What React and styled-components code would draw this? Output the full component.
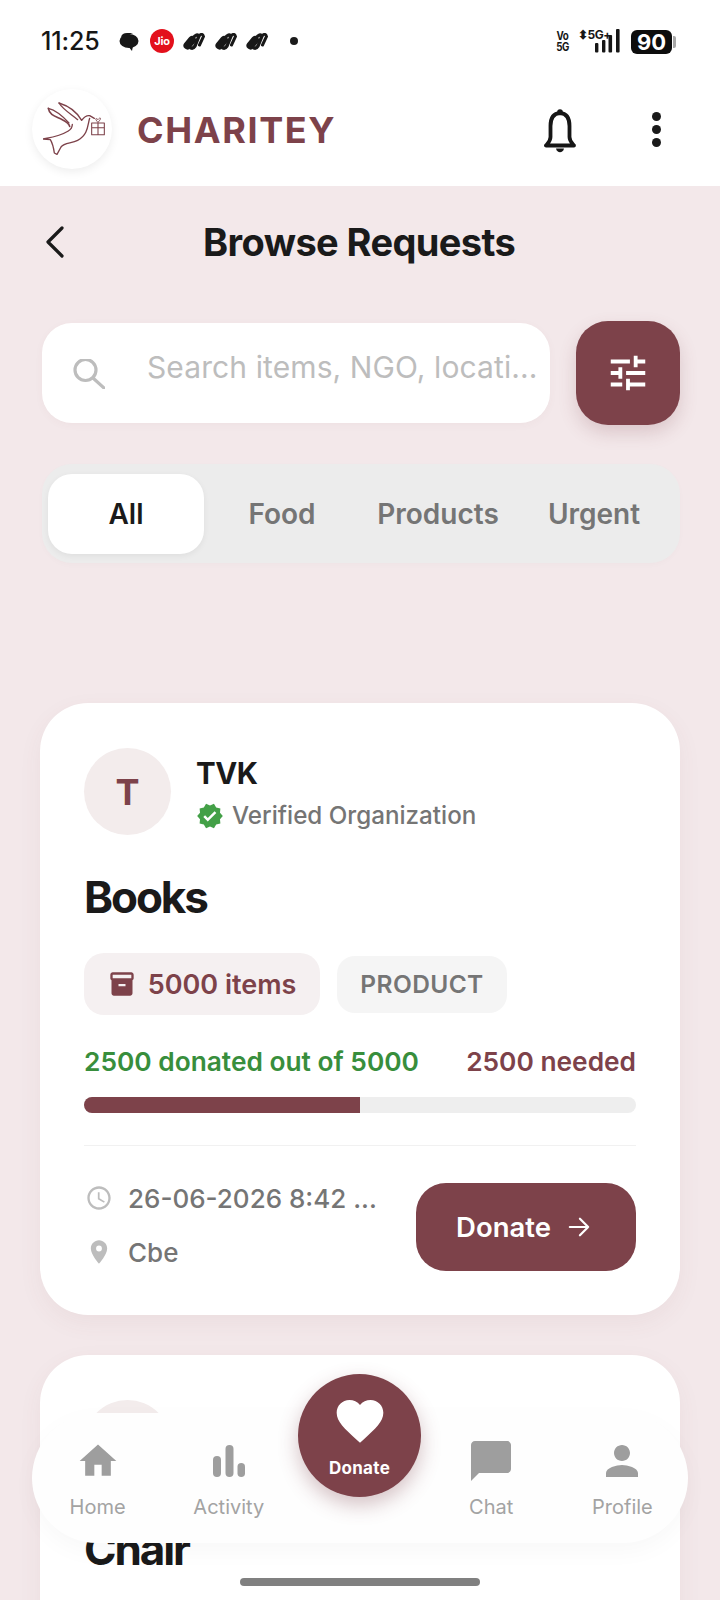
import React from "react";
import styled, { createGlobalStyle } from "styled-components";
import { MdHome, MdChatBubble, MdPerson, MdTune, MdVerified, MdInventory2, MdLocationOn, MdFavorite, MdAccessTime } from "react-icons/md";

const maroon = "#7d424a";
const Global = createGlobalStyle`
  html, body { margin: 0; padding: 0; background: #f3e8ea; }
  * { box-sizing: border-box; }
  body { font-family: Inter, "Liberation Sans", sans-serif; }
`;
const Page = styled.div`
  position: relative; width: 720px; height: 1600px; overflow: hidden; background: #f3e8ea;
`;
const TopBlock = styled.header`
  background: #fff; height: 186px; display: flex; flex-direction: column;
`;
const StatusBar = styled.div`
  height: 82px; padding: 29px 48px 0 41px; display: flex; align-items: flex-start; color: #161616;
`;
const Time = styled.span`
  font-size: 25px; font-weight: 500; line-height: 24px; width: 78px; letter-spacing: -0.1px;
`;
const NotifIcons = styled.div`
  display: flex; align-items: center; height: 24px; flex: 1;
`;
const Jio = styled.span`
  width: 24px; height: 24px; border-radius: 50%; background: #e3101c; color: #fff; font-size: 11px; font-weight: 700;
  display: flex; align-items: center; justify-content: center; margin: 0 9px 0 11px; letter-spacing: -0.3px;
`;
const Blob = styled.svg`
  width: 22px; height: 17px; margin-right: 9.5px;
`;
const Dot = styled.span`
  width: 8px; height: 8px; border-radius: 50%; background: #1b1b1b; margin-left: 12px;
`;
const RightIcons = styled.div`
  display: flex; align-items: flex-start;
`;
const VoLte = styled.span`
  display: flex; flex-direction: column; align-items: center; width: 13px; font-size: 11.5px; font-weight: 700;
  line-height: 10.5px; margin: 2px 10px 0 0; letter-spacing: -0.5px; transform: scaleX(.85);
`;
const SignalWrap = styled.span`
  position: relative; display: block; width: 41px; height: 24px; margin-right: 11px;
`;
const NetLabel = styled.span`
  position: absolute; top: 0; left: -1px; font-size: 12px; font-weight: 700; line-height: 11px; letter-spacing: -0.5px; white-space: nowrap;
`;
const Battery = styled.span`
  position: relative; width: 41px; height: 24px; background: #0d0d0d; color: #fff; border-radius: 6px; font-size: 22px;
  font-weight: 700; line-height: 24px; text-align: center; margin-top: 1px;
  &::after { content: ""; position: absolute; right: -4px; top: 6px; width: 3px; height: 12px; background: #a8a8a8; border-radius: 0 2px 2px 0; }
`;
const AppBar = styled.div`
  flex: 1; display: flex; align-items: flex-start; padding: 7px 0 0 32px;
`;
const LogoCircle = styled.div`
  width: 80px; height: 80px; border-radius: 50%; background: #fff; box-shadow: 0 3px 10px rgba(0,0,0,.07);
  display: flex; align-items: center; justify-content: center;
  svg { margin-left: 5px; }
`;
const Brand = styled.h1`
  margin: 20px 0 0 25px; font-size: 36px; line-height: 42px; font-weight: 700; color: ${maroon}; letter-spacing: 1.6px; flex: 1;
`;
const BellBtn = styled.div`
  width: 32px; height: 44px; margin: 20px 76px 0 0;
`;
const Kebab = styled.div`
  display: flex; flex-direction: column; gap: 4px; margin: 23px 59px 0 0;
  span { width: 9px; height: 9px; border-radius: 50%; background: #1a1a1a; display: block; }
`;
const TitleRow = styled.div`
  display: flex; align-items: center; height: 48px; margin-top: 32px; padding: 0 0 0 44px;
`;
const Title = styled.h2`
  margin: 0 0 0 137px; font-size: 38px; line-height: 48px; font-weight: 700; color: #1a1a1a; letter-spacing: -0.6px;
`;
const SearchRow = styled.div`
  display: flex; gap: 26px; align-items: center; padding: 0 40px 0 42px; margin-top: 55px;
`;
const SearchBox = styled.div`
  width: 508px; height: 100px; border-radius: 30px; background: #fff; padding: 0 0 10px 31px;
  display: flex; align-items: center; box-shadow: 0 2px 8px rgba(125,66,74,.04);
`;
const SearchGlyph = styled.svg`
  flex-shrink: 0; margin-top: 12px;
`;
const Placeholder = styled.span`
  margin: 0 0 3px 42px; font-size: 30px; color: #bdbdbd; white-space: nowrap; letter-spacing: 0.1px;
`;
const FilterBtn = styled.div`
  width: 104px; height: 104px; border-radius: 32px; background: ${maroon}; color: #fff; display: flex; align-items: center;
  justify-content: center; box-shadow: 0 8px 18px rgba(125,66,74,.2);
`;
const Tabs = styled.div`
  display: flex; margin: 39px 40px 0 42px; height: 99px; background: #ececec; border-radius: 30px; padding: 10px 8px 9px 6px;
  box-shadow: 0 2px 6px rgba(0,0,0,.02);
`;
const Tab = styled.div`
  flex: 1; display: flex; align-items: center; justify-content: center; font-size: 28px; font-weight: 600; border-radius: 24px;
  color: ${p => (p.$active ? "#1a1a1a" : "#757575")};
  background: ${p => (p.$active ? "#fff" : "transparent")};
  box-shadow: ${p => (p.$active ? "0 2px 6px rgba(0,0,0,.06)" : "none")};
`;
const Card = styled.article`
  margin: ${p => p.$mt}px 40px 0; height: 612px; background: #fff; border-radius: 48px; padding: 45px 44px 0 44px;
  box-shadow: 0 8px 24px rgba(125,66,74,.06);
`;
const OrgRow = styled.div`
  display: flex; align-items: flex-start; gap: 25px;
`;
const Avatar = styled.div`
  width: 87px; height: 87px; border-radius: 50%; color: ${maroon}; font-size: 36px; font-weight: 700;
  display: flex; align-items: center; justify-content: center; background: #f3ecec;
`;
const OrgName = styled.div`
  font-size: 29.5px; line-height: 36px; font-weight: 700; color: #1a1a1a; margin-top: 7px; letter-spacing: -0.5px;
`;
const VerifiedRow = styled.div`
  display: flex; align-items: center; gap: 8px; font-size: 24.2px; font-weight: 500; color: #757575; margin-top: 7px; line-height: 36px;
`;
const ItemName = styled.h3`
  margin: 35px 0 0; font-size: 44px; line-height: 54px; font-weight: 700; color: #1a1a1a; letter-spacing: -2.1px;
`;
const Chips = styled.div`
  display: flex; align-items: center; gap: 17px; margin-top: 29px;
`;
const QtyChip = styled.div`
  height: 62px; width: 236px; border-radius: 20px; background: #f5f0f1; color: ${maroon}; font-size: 27px; font-weight: 600;
  display: flex; align-items: center; justify-content: center; gap: 12px;
`;
const TypeChip = styled.div`
  height: 57px; width: 170px; border-radius: 18px; background: #f5f5f5; color: #757575; font-size: 24.5px; font-weight: 600;
  display: flex; align-items: center; justify-content: center; letter-spacing: 0.4px;
`;
const ProgressText = styled.div`
  display: flex; justify-content: space-between; margin-top: 30px; font-size: 26.3px; line-height: 34px; font-weight: 600;
`;
const Donated = styled.span` color: #388e3c; `;
const Needed = styled.span` color: ${maroon}; `;
const Track = styled.div`
  height: 16px; border-radius: 8px; background: #eeeeee; margin-top: 18px; overflow: hidden;
`;
const Fill = styled.div`
  height: 100%; background: ${maroon};
`;
const Divider = styled.div`
  height: 1px; background: #f1f1f1; margin-top: 32px;
`;
const Bottom = styled.div`
  display: flex; justify-content: space-between; margin-top: 37px;
`;
const Meta = styled.div`
  display: flex; flex-direction: column; gap: 20px; margin-top: -2px;
`;
const MetaRow = styled.div`
  display: flex; align-items: center; gap: 15px; height: 34px; font-size: 26px; font-weight: 500; color: #757575; white-space: nowrap;
  svg { color: #bdbdbd; margin-left: 1px; }
`;
const DonateBtn = styled.div`
  width: 220px; height: 88px; border-radius: 30px; background: ${maroon}; color: #fff; font-size: 27.5px; font-weight: 600;
  display: flex; align-items: center; justify-content: center; gap: 17px; padding-right: 6px;
`;
const BottomNav = styled.nav`
  position: absolute; left: 32px; top: 1413px; width: 656px; height: 130px; border-radius: 65px; background: #fefefe;
  display: flex; box-shadow: 0 8px 24px rgba(0,0,0,.03);
`;
const NavItem = styled.div`
  flex: 1; display: flex; flex-direction: column; align-items: center; padding-top: 24px; color: #9e9e9e;
`;
const NavIcon = styled.div`
  height: 48px; display: flex; align-items: center; justify-content: center;
`;
const NavLabel = styled.span`
  font-size: 20px; line-height: 24px; color: #a3a3a3; margin-top: 10px;
`;
const Fab = styled.div`
  position: absolute; left: 266px; top: -39px; width: 123px; height: 123px; border-radius: 50%; background: ${maroon}; color: #fff;
  display: flex; flex-direction: column; align-items: center; padding-top: 19px; box-shadow: 0 8px 20px rgba(125,66,74,.32);
  span { font-size: 17px; font-weight: 700; line-height: 22px; margin-top: 12px; letter-spacing: 0.3px; }
`;
const HomeBar = styled.div`
  position: absolute; left: 240px; top: 1578px; width: 240px; height: 8px; border-radius: 4px; background: #808080;
`;

const BlobIcon = () => (
  <Blob viewBox="0 0 22 17">
    <g fill="none" strokeLinecap="round">
      <path d="M4.5 12.5 L9 7" stroke="#181818" strokeWidth="8" />
      <path d="M10 5 Q14 0 16 3 L12 13 Q10 16 8 15" stroke="#181818" strokeWidth="3.4" />
      <path d="M15.5 3 Q19.5 -0.5 20.5 3.5 L16.5 12" stroke="#181818" strokeWidth="3" />
    </g>
  </Blob>
);

const Logo = () => (
  <svg width="64" height="56" viewBox="72 66 192 168" fill="none" stroke={maroon} strokeLinecap="round" strokeLinejoin="round">
    <path d="M88 88 C92 110 110 112 130 122 C142 128 150 134 152 142" strokeWidth="5" />
    <path d="M88 88 C112 94 132 112 150 132" strokeWidth="3.5" />
    <path d="M120 72 C132 92 160 108 176 122" strokeWidth="4" />
    <path d="M120 72 C146 80 172 96 188 124 C194 116 202 108 212 110 L226 118" strokeWidth="4" />
    <path d="M212 118 C206 136 208 168 176 184 C158 194 136 190 126 204 L114 226 L106 222 C104 208 100 192 94 182 L72 180 C92 176 122 172 148 156 C158 150 160 144 160 136" strokeWidth="4" />
    <path d="M218 132 H256 V167 H218 Z M237 132 V167 M218 146 H256" strokeWidth="3.2" />
    <path d="M237 130 C228 122 228 114 237 122 C244 112 250 118 237 130" strokeWidth="2.6" />
  </svg>
);

const Bell = () => (
  <svg width="32" height="44" viewBox="0 0 32 44" fill="none" stroke="#161616">
    <circle cx="16" cy="3" r="2.8" fill="#161616" stroke="none" />
    <path d="M16 4 C8 4.5 6.5 11 6.5 17 V28 C6.5 32 4 34 2 36.5 H30 C28 34 25.5 32 25.5 28 V17 C25.5 11 24 4.5 16 4 Z" strokeWidth="3.8" strokeLinejoin="round" />
    <path d="M12 39.5 H20 C19 44.5 13 44.5 12 39.5 Z" fill="#161616" stroke="none" />
  </svg>
);

const Bars = () => (
  <svg width="32" height="32" viewBox="0 0 32 32" fill="#9e9e9e">
    <rect x="0" y="11" width="8" height="21" rx="4" />
    <rect x="12.5" y="0" width="8" height="32" rx="4" />
    <rect x="24.5" y="18" width="7.5" height="14" rx="3.75" />
  </svg>
);

const Bubble = () => (
  <svg width="20" height="19" viewBox="0 0 20 19" fill="#181818">
    <ellipse cx="10" cy="9" rx="9.5" ry="7" />
    <path d="M9 14 L14 14 L13 19 Z" />
    <path d="M2 5 Q3 1 8 1 L14 1 L9 3 Z" />
  </svg>
);

const SignalIcon = styled.svg`
  position: absolute; left: 16px; top: 0;
`;
const Signal = () => (
  <SignalIcon width="25" height="24" viewBox="0 0 25 24" fill="#161616">
    <rect x="0" y="14" width="3.4" height="9.5" rx="1" />
    <rect x="7" y="11" width="3.4" height="12.5" rx="1" />
    <rect x="13.5" y="6" width="3.6" height="17.5" rx="1" />
    <rect x="21" y="0" width="3.6" height="23.5" rx="1" />
  </SignalIcon>
);

const CardBody = ({ initial, org, item, qty, type, done, total }) => (
  <>
    <OrgRow>
      <Avatar>{initial}</Avatar>
      <div>
        <OrgName>{org}</OrgName>
        <VerifiedRow><MdVerified size={28} color="#43a047" />Verified Organization</VerifiedRow>
      </div>
    </OrgRow>
    <ItemName>{item}</ItemName>
    <Chips>
      <QtyChip><MdInventory2 size={28} />{qty} items</QtyChip>
      <TypeChip>{type}</TypeChip>
    </Chips>
    <ProgressText>
      <Donated>{done} donated out of {total}</Donated>
      <Needed>{total - done} needed</Needed>
    </ProgressText>
    <Track><Fill style={{ width: `${(done / total) * 100}%` }} /></Track>
    <Divider />
    <Bottom>
      <Meta>
        <MetaRow><MdAccessTime size={28} />26-06-2026 8:42 ...</MetaRow>
        <MetaRow><MdLocationOn size={28} />Cbe</MetaRow>
      </Meta>
      <DonateBtn>Donate
        <svg width="22" height="22" viewBox="0 0 24 24" fill="none" stroke="#fff" strokeWidth="2.4" strokeLinecap="round" strokeLinejoin="round"><path d="M2 12 H22 M13 3 L22 12 L13 21" /></svg>
      </DonateBtn>
    </Bottom>
  </>
);

export default function App() {
  return (
    <Page>
      <Global />
      <TopBlock>
        <StatusBar>
          <Time>11:25</Time>
          <NotifIcons>
            <Bubble />
            <Jio>Jio</Jio>
            <BlobIcon /><BlobIcon /><BlobIcon />
            <Dot />
          </NotifIcons>
          <RightIcons>
            <VoLte><span>Vo</span><span>5G</span></VoLte>
            <SignalWrap>
              <NetLabel>⬍5G+</NetLabel>
              <Signal />
            </SignalWrap>
            <Battery>90</Battery>
          </RightIcons>
        </StatusBar>
        <AppBar>
          <LogoCircle><Logo /></LogoCircle>
          <Brand>CHARITEY</Brand>
          <BellBtn><Bell /></BellBtn>
          <Kebab><span /><span /><span /></Kebab>
        </AppBar>
      </TopBlock>
      <TitleRow>
        <svg width="22" height="32" viewBox="0 0 22 32" fill="none" stroke="#1a1a1a" strokeWidth="3.2" strokeLinecap="round" strokeLinejoin="round"><path d="M18 2 L4 16 L18 30" /></svg>
        <Title>Browse Requests</Title>
      </TitleRow>
      <SearchRow>
        <SearchBox>
          <SearchGlyph width="32" height="30" viewBox="0 0 32 30" fill="none" stroke="#bdbdbd" strokeWidth="3.2" strokeLinecap="round">
            <circle cx="12.5" cy="11" r="10.5" />
            <path d="M20 19 L31 29" />
          </SearchGlyph>
          <Placeholder>Search items, NGO, locati...</Placeholder>
        </SearchBox>
        <FilterBtn><MdTune size={46} /></FilterBtn>
      </SearchRow>
      <Tabs>
        <Tab $active>All</Tab>
        <Tab>Food</Tab>
        <Tab>Products</Tab>
        <Tab>Urgent</Tab>
      </Tabs>
      <Card $mt={140}>
        <CardBody initial="T" org="TVK" item="Books" qty={5000} type="PRODUCT" done={2500} total={5000} />
      </Card>
      <Card $mt={40}>
        <CardBody initial="S" org="Sri" item="Chair" qty={100} type="PRODUCT" done={50} total={100} />
      </Card>
      <BottomNav>
        <NavItem><NavIcon><MdHome size={44} /></NavIcon><NavLabel>Home</NavLabel></NavItem>
        <NavItem><NavIcon><Bars /></NavIcon><NavLabel>Activity</NavLabel></NavItem>
        <NavItem />
        <NavItem><NavIcon><MdChatBubble size={48} /></NavIcon><NavLabel>Chat</NavLabel></NavItem>
        <NavItem><NavIcon><MdPerson size={48} /></NavIcon><NavLabel>Profile</NavLabel></NavItem>
        <Fab><MdFavorite size={56} style={{ marginBottom: -4 }} /><span>Donate</span></Fab>
      </BottomNav>
      <HomeBar />
    </Page>
  );
}
